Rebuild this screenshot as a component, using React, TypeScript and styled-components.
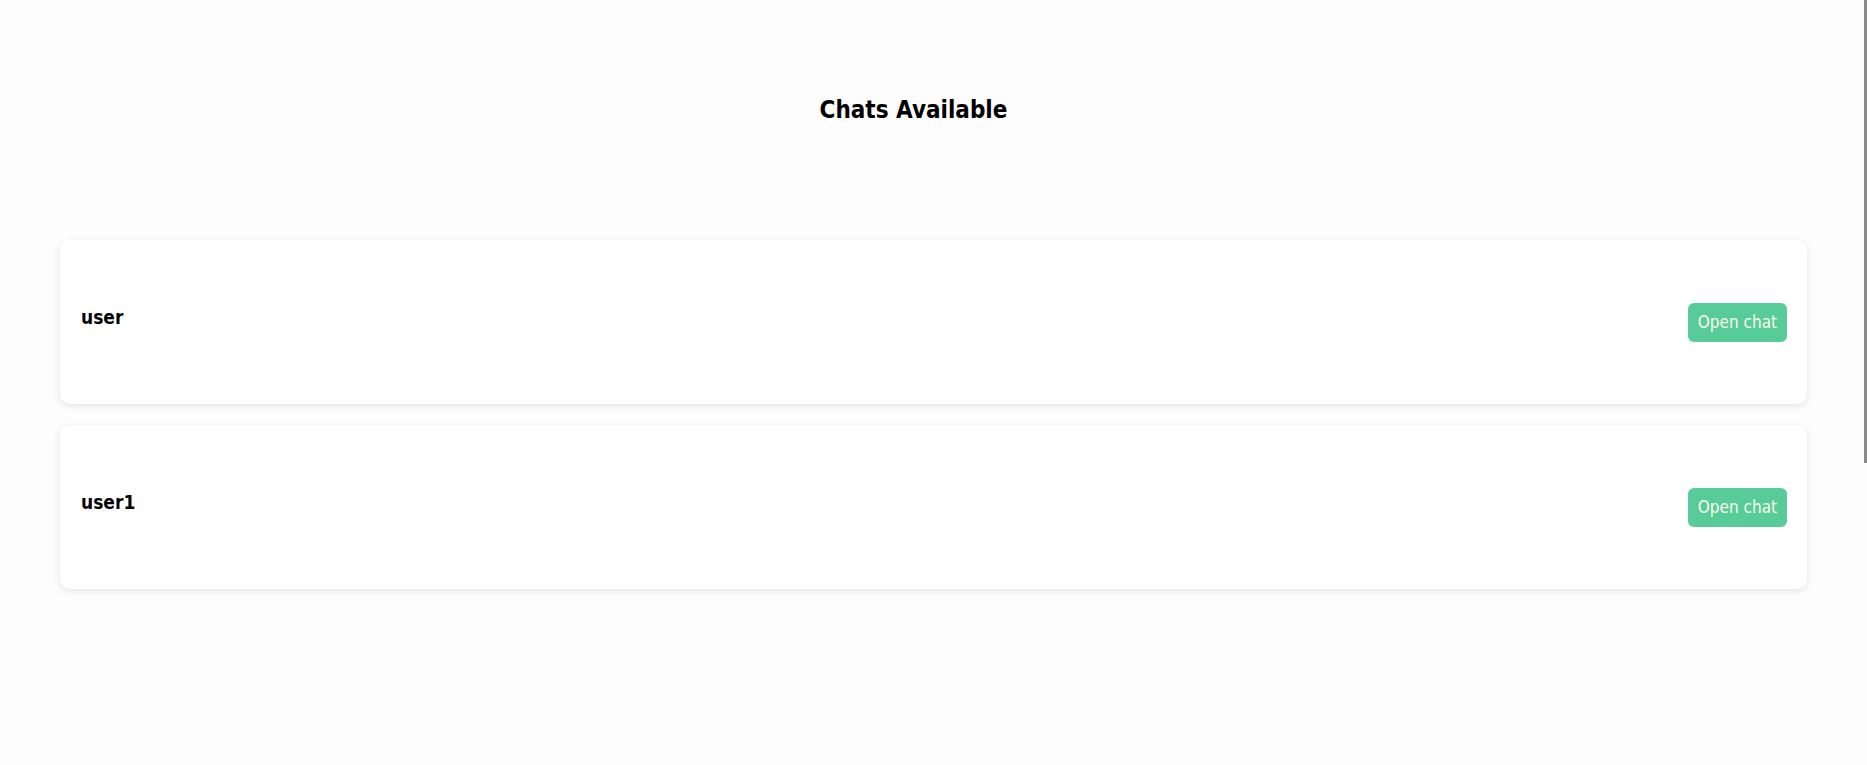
import React from "react";
import styled, { createGlobalStyle } from "styled-components";

const Global = createGlobalStyle`
  html, body {
    margin: 0;
    padding: 0;
    background: #fdfdfd;
  }
  body {
    font-family: "DejaVu Sans Condensed", "DejaVu Sans", sans-serif;
    color: #000;
  }
`;

const Page = styled.main`
  box-sizing: border-box;
  padding: 96px 60px 40px;
`;

const Title = styled.h1`
  margin: 0 40px 0 0;
  font-size: 24px;
  font-weight: 700;
  text-align: center;
  line-height: 28px;
`;

const List = styled.section`
  margin-top: 116px;
  display: flex;
  flex-direction: column;
  gap: 21px;
`;

const Card = styled.article`
  height: 164px;
  box-sizing: border-box;
  padding: 0 20px 0 21px;
  background: #ffffff;
  border-radius: 10px;
  box-shadow: 0 2px 7px rgba(0, 0, 0, 0.1);
  display: flex;
  align-items: center;
  justify-content: space-between;
`;

const Name = styled.h3`
  margin: 0 0 10px;
  font-size: 19px;
  font-weight: 700;
  line-height: 22px;
`;

const OpenButton = styled.button`
  height: 39px;
  padding: 0 10px;
  border: none;
  border-radius: 6px;
  background: #57cc99;
  color: #fbfbe9;
  font-family: "DejaVu Sans Condensed", "DejaVu Sans", sans-serif;
  font-size: 17px;
  cursor: pointer;
`;

const ScrollThumb = styled.div`
  position: fixed;
  top: 0;
  right: 0;
  width: 3px;
  height: 463px;
  background: #8a8a8a;
`;

const chats = ["user", "user1"];

export default function App() {
  return (
    <>
      <Global />
      <Page>
        <Title>Chats Available</Title>
        <List>
          {chats.map((c) => (
            <Card key={c}>
              <Name>{c}</Name>
              <OpenButton>Open chat</OpenButton>
            </Card>
          ))}
        </List>
      </Page>
      <ScrollThumb />
    </>
  );
}
